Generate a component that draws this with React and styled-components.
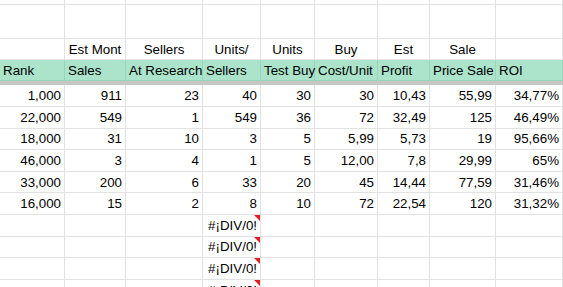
import styled, { createGlobalStyle } from "styled-components";

const COLS = [65, 61, 77, 58, 54, 63, 52, 66, 67];

const topLabels = ["", "Est Mont", "Sellers", "Units/", "Units", "Buy", "Est", "Sale", ""];
const headers = [
  "Rank",
  "Sales",
  "At Research",
  "Sellers",
  "Test Buy",
  "Cost/Unit",
  "Profit",
  "Price Sale",
  "ROI",
];

const filas = [
  ["1,000", "911", "23", "40", "30", "30", "10,43", "55,99", "34,77%"],
  ["22,000", "549", "1", "549", "36", "72", "32,49", "125", "46,49%"],
  ["18,000", "31", "10", "3", "5", "5,99", "5,73", "19", "95,66%"],
  ["46,000", "3", "4", "1", "5", "12,00", "7,8", "29,99", "65%"],
  ["33,000", "200", "6", "33", "20", "45", "14,44", "77,59", "31,46%"],
  ["16,000", "15", "2", "8", "10", "72", "22,54", "120", "31,32%"],
];

const errorRows = 4;

const App = () => {
  return (
    <>
      <GlobalStyle />
      <Sheet>
        <Row height={5}>
          {COLS.map((_, i) => (
            <Cell key={i} />
          ))}
        </Row>
        <Row height={34}>
          {COLS.map((_, i) => (
            <Cell key={i} />
          ))}
        </Row>
        <Row height={21}>
          {topLabels.map((t, i) => (
            <Cell key={i} align="center">
              {t}
            </Cell>
          ))}
        </Row>
        <HeaderRow>
          {headers.map((h, i) => (
            <HeaderCell key={i}>{h}</HeaderCell>
          ))}
        </HeaderRow>
        <FrozenBar />
        {filas.map((fila, r) => (
          <Row key={r} height={r === 0 ? 22 : 21.6}>
            {fila.map((v, c) => (
              <Cell key={c} align="right">
                {v}
              </Cell>
            ))}
          </Row>
        ))}
        {Array.from({ length: errorRows }).map((_, r) => (
          <Row key={`e${r}`} height={21.6}>
            {COLS.map((_, c) =>
              c === 3 ? (
                <Cell key={c} align="right" error>
                  #¡DIV/0!
                </Cell>
              ) : (
                <Cell key={c} />
              )
            )}
          </Row>
        ))}
      </Sheet>
    </>
  );
};

// Estilos
const GlobalStyle = createGlobalStyle`
  html, body {
    margin: 0;
    padding: 0;
    background: #ffffff;
    overflow: hidden;
  }
  body {
    font-family: "Liberation Sans", Arial, sans-serif;
    font-size: 13.33px;
    color: #000000;
  }
`;

const Sheet = styled.div`
  width: 563px;
  height: 287px;
  overflow: hidden;
  display: flex;
  flex-direction: column;
`;

const Row = styled.div`
  display: grid;
  grid-template-columns: ${COLS.map((w) => `${w}px`).join(" ")};
  height: ${(props) => props.height}px;
  flex-shrink: 0;
`;

const Cell = styled.div`
  position: relative;
  box-sizing: border-box;
  border-right: 1px solid #e2e2e2;
  border-bottom: 1px solid #e2e2e2;
  padding: 0 3px 0 3px;
  display: flex;
  align-items: center;
  justify-content: ${(props) =>
    props.align === "right"
      ? "flex-end"
      : props.align === "center"
      ? "center"
      : "flex-start"};
  white-space: nowrap;
  line-height: 16px;
  padding-top: 1px;

  ${(props) =>
    props.error &&
    `
    &::after {
      content: "";
      position: absolute;
      top: 0;
      right: 0;
      width: 0;
      height: 0;
      border-top: 6px solid #e02020;
      border-left: 6px solid transparent;
    }
  `}
`;

const HeaderRow = styled(Row)`
  height: 21px;
  background: #abe3cb;
`;

const HeaderCell = styled.div`
  box-sizing: border-box;
  border-right: 1px solid #97d4b9;
  border-bottom: 1px solid #97d4b9;
  padding: 1px 3px 0 3px;
  display: flex;
  align-items: center;
  white-space: nowrap;
  overflow: visible;
  line-height: 16px;
`;

const FrozenBar = styled.div`
  height: 4px;
  width: 563px;
  background: #c6c6c6;
  flex-shrink: 0;
`;

export default App;
